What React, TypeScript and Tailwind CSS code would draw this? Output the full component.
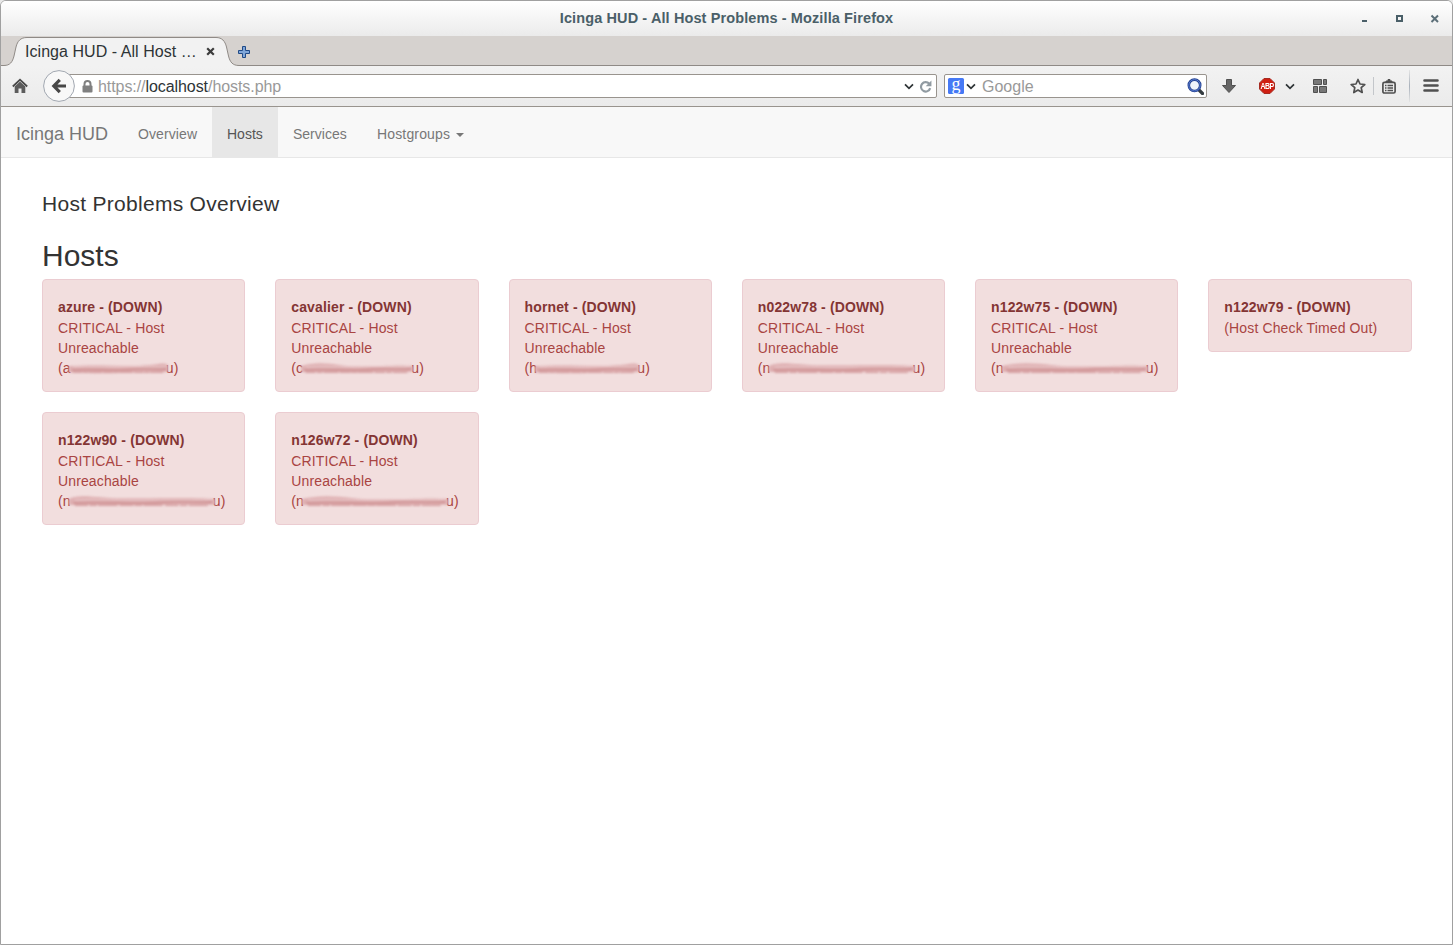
import React from "react";

type Host = {
  name: string;
  lines: string[];
  masked?: { start: string; end: string; width: number; variant: number };
};

const unreachable = ["CRITICAL - Host", "Unreachable"];

const hosts: Host[] = [
  { name: "azure", lines: unreachable, masked: { start: "a", end: "u", width: 95, variant: 0 } },
  { name: "cavalier", lines: unreachable, masked: { start: "c", end: "u", width: 108, variant: 1 } },
  { name: "hornet", lines: unreachable, masked: { start: "h", end: "u", width: 100, variant: 0 } },
  { name: "n022w78", lines: unreachable, masked: { start: "n", end: "u", width: 142, variant: 2 } },
  { name: "n122w75", lines: unreachable, masked: { start: "n", end: "u", width: 142, variant: 1 } },
  { name: "n122w79", lines: ["(Host Check Timed Out)"] },
  { name: "n122w90", lines: unreachable, masked: { start: "n", end: "u", width: 142, variant: 2 } },
  { name: "n126w72", lines: unreachable, masked: { start: "n", end: "u", width: 142, variant: 1 } },
];

const smudgeShapes = [
  "M0 5 C15 4.500 25 4 40 4.500 S70 5 82 4 S94 1 100 4 L100 11 C85 12 65 11.500 50 12 S15 12 0 11.500Z",
  "M0 5 C12 1 22 2 34 4 S60 5.500 72 5 S90 4 100 5 L100 11 C85 10 70 11.500 55 12 S20 11 0 11Z",
  "M0 5 C4 1 12 2 24 3.500 S55 4 70 4 S92 4 100 5 L100 11 C82 10.500 68 11 50 11.500 S14 11 0 11Z",
];

function Smudge({ width, variant }: { width: number; variant: number }) {
  return (
    <svg
      className="-mx-0.5 inline-block h-3.5 shrink-0 overflow-visible blur-[0.8px]"
      style={{ width: width + 4 }}
      viewBox="0 0 100 14"
      preserveAspectRatio="none"
    >
      <path d={smudgeShapes[variant]} fill="#dfb0b2" />
      <path d="M4 6 C20 4 35 7 55 6 S80 7 98 5.500" fill="none" stroke="#e6c2c4" strokeWidth="1.500" />
      <path d="M3 9 C20 7.500 45 10 62 8.500 S86 9 98 8" fill="none" stroke="#cf9294" strokeWidth="1.800" />
      <path d="M4 11.300H97" stroke="#d39b9d" strokeWidth="1.300" strokeDasharray="9 1 5 1 13 2" />
    </svg>
  );
}

function HostCard({ host }: { host: Host }) {
  return (
    <div className="rounded-[4px] border border-[#ebccd1] bg-[#f2dede] px-[15px] pt-[17px] pb-[13px] text-[14px] leading-5 tracking-[0.13px] text-[#a94442]">
      <div className="h-[21px] font-bold text-[#843534]">{host.name} - (DOWN)</div>
      {host.lines.map((line) => (
        <div key={line} className="whitespace-nowrap">{line}</div>
      ))}
      {host.masked && (
        <div className="flex h-5 items-center">
          <span>({host.masked.start}</span>
          <Smudge width={host.masked.width} variant={host.masked.variant} />
          <span>{host.masked.end})</span>
        </div>
      )}
    </div>
  );
}

function Chevron({ className }: { className: string }) {
  return (
    <svg className={"h-[7px] w-[10px] shrink-0 " + className} viewBox="0 0 10 7">
      <path d="M1 1.300 5 5.300 9 1.300" fill="none" stroke="#2e3436" strokeWidth="1.700" />
    </svg>
  );
}

function TitleBar() {
  return (
    <div className="flex h-[35px] items-center bg-linear-to-b from-white to-[#ebebeb]">
      <div className="w-[120px]" />
      <div className="flex-1 text-center text-[14.5px] font-bold tracking-[0.11px] text-[#4a5f68]">
        Icinga HUD - All Host Problems - Mozilla Firefox
      </div>
      <svg className="h-[35px] w-[120px]" viewBox="0 0 120 35">
        <path d="M30 19h5v2h-5z" fill="#4a5f68" />
        <path d="M65 15h5v5h-5z" fill="none" stroke="#4a5f68" strokeWidth="2" />
        <path d="M99.500 14.500 106 21M106 14.500 99.500 21" stroke="#5c6f78" strokeWidth="2" />
      </svg>
    </div>
  );
}

function TabStrip() {
  return (
    <div className="grid h-[30px] grid-cols-1 bg-[#d6d2cf]">
      <svg className="col-start-1 row-start-1 h-[30px] w-full" viewBox="0 0 1451 30" preserveAspectRatio="none">
        <path
          d="M0 29.500H3C9 29.500 11.500 26 13 20L15 11C16.500 5 19.500 1.500 26 1.500H215C221 1.500 224 5 225.500 11L227.500 20C229 26 231.500 29.500 238 29.500H1451V31H0Z"
          fill="#f2f2f2"
          stroke="#8f8a86"
        />
      </svg>
      <div className="col-start-1 row-start-1 flex items-center pl-6">
        <span className="w-[181px] pt-[2px] text-[16px] tracking-[0.05px] whitespace-nowrap text-[#2e3436]">Icinga HUD - All Host …</span>
        <svg className="mt-px h-[9px] w-[9px]" viewBox="0 0 9 9">
          <path d="M1.200 1.200 7.800 7.800M7.800 1.200 1.200 7.800" stroke="#3c3c3c" strokeWidth="2.200" />
        </svg>
        <svg className="mt-[2px] ml-[23px] h-3 w-3" viewBox="0 0 12 12">
          <path
            d="M4.500.5h3v4h4v3h-4v4h-3v-4h-4v-3h4z"
            fill="#7fa6d9"
            stroke="#204a87"
            strokeLinejoin="round"
          />
        </svg>
      </div>
    </div>
  );
}

function ToolBar() {
  return (
    <div className="flex h-[41px] items-center border-b border-[#99948e] bg-linear-to-b from-[#f2f2f2] to-[#ebebeb]">
      <svg className="ml-[11px] h-4 w-4 shrink-0" viewBox="0 0 16 16">
        <path d="M8 3.500 13.300 8.600V15H9.500V10.500H6.500V15H2.700V8.600Z" fill="#5c5c5c" />
        <path d="M.8 8.500 8 1.700 15.200 8.500" fill="none" stroke="#4a4a4a" strokeWidth="1.800" />
      </svg>
      <svg className="z-10 ml-[15px] h-8 w-8 shrink-0" viewBox="0 0 32 32">
        <circle cx="16" cy="16" r="15.400" fill="#f8f8f8" stroke="#a1a7b0" />
        <path d="M16.800 9.800 10.800 16l6 6.200M11 16h12" fill="none" stroke="#474747" strokeWidth="3.200" />
      </svg>
      <div className="-ml-[9px] flex h-6 w-[871px] items-center rounded-[2px] border border-[#99948e] bg-white">
        <svg className="ml-[15px] h-[13px] w-[11px] shrink-0" viewBox="0 0 11 13">
          <path d="M2.500 6V4a3 3 0 0 1 6 0v2" fill="none" stroke="#808080" strokeWidth="2" />
          <rect x="0.500" y="5.500" width="10" height="7" rx="1" fill="#808080" />
        </svg>
        <span className="ml-[5px] flex-1 pt-[2px] text-[16px] tracking-[-0.07px] whitespace-nowrap text-[#999]">
          https://<span className="text-[#2e3436]">localhost</span>/hosts.php
        </span>
        <Chevron className="mr-[5px]" />
        <svg className="mr-[4px] h-[13px] w-[13px] shrink-0" viewBox="0 0 12 12">
          <path d="M9.400 3.500A4.300 4.300 0 1 0 10.300 7.500" fill="none" stroke="#919ba2" strokeWidth="2" />
          <path d="M11.500.5v5.300H6.200z" fill="#919ba2" />
        </svg>
      </div>
      <div className="ml-[7px] flex h-6 w-[263px] items-center rounded-[2px] border border-[#99948e] bg-white">
        <div className="ml-[3px] flex h-4 w-4 shrink-0 justify-center rounded-[1.5px] bg-[#4679f5] font-['Liberation_Serif',serif] text-[18px] leading-[12px] text-white">
          g
        </div>
        <Chevron className="ml-[2px]" />
        <span className="ml-[6px] flex-1 pt-[2px] text-[16px] text-[#999]">Google</span>
        <svg className="mr-[2px] h-[17px] w-[17px] shrink-0" viewBox="0 0 17 17">
          <path d="m11.500 11.500 4 4" stroke="#343b40" strokeWidth="3.200" strokeLinecap="round" />
          <circle cx="7.500" cy="7.300" r="5.700" fill="#eef3fb" stroke="#23408f" strokeWidth="2.600" />
          <circle cx="7.500" cy="7.300" r="5.700" fill="none" stroke="#5c80d2" strokeWidth="1" />
        </svg>
      </div>
      <svg className="ml-[15px] h-[14px] w-[14px] shrink-0" viewBox="0 0 14 14">
        <path d="M4.500.5h5v6h4L7 13.500.5 6.500h4z" fill="#666" stroke="#505050" />
      </svg>
      <div className="ml-[23px] grid h-4 w-4 shrink-0 grid-cols-1">
        <svg className="col-start-1 row-start-1 h-4 w-4" viewBox="0 0 16 16">
          <path d="M5 .5h6L15.500 5v6L11 15.500H5L.5 11V5z" fill="#cf1f12" stroke="#a52c22" />
        </svg>
        <span className="col-start-1 row-start-1 scale-y-[1.3] text-center text-[7px] leading-4 font-bold tracking-[-0.6px] text-white">
          ABP
        </span>
      </div>
      <Chevron className="ml-[10px]" />
      <svg className="ml-[18px] h-[14px] w-[14px] shrink-0" viewBox="0 0 14 14">
        <path d="M.5.500h8v5h-8zM10.500.500h3v5h-3zM.5 7.500h4v6h-4zM6.500 7.500h7v6h-7z" fill="#777" stroke="#505050" />
      </svg>
      <svg className="ml-[23px] h-4 w-4 shrink-0" viewBox="0 0 16 16">
        <path d="m8 1.500 2 4.500 4.800.5-3.600 3.200 1 4.800L8 12l-4.200 2.500 1-4.800L1.200 6.500 6 6z" fill="none" stroke="#505050" strokeWidth="1.700" strokeLinejoin="round" />
      </svg>
      <div className="ml-[7px] h-[18px] w-px shrink-0 bg-[#c3c6ca]" />
      <svg className="ml-2 h-[15px] w-[14px] shrink-0" viewBox="0 0 14 15">
        <rect x="0.900" y="3.400" width="12.200" height="10.600" rx="1.500" fill="none" stroke="#505050" strokeWidth="1.700" />
        <path d="M4 3.500V2h2V.5h2V2h2v1.500z" fill="#505050" stroke="#505050" />
        <path d="M3 6.500h1.500M3 9h1.500M3 11.500h1.500M5.500 6.500H11M5.500 9H11M5.500 11.500H11" stroke="#505050" strokeWidth="1.300" />
      </svg>
      <div className="ml-[13px] h-8 w-px shrink-0 bg-linear-to-b from-[#e4e4e4] via-[#a9b1bb] to-[#e4e4e4]" />
      <svg className="mb-px ml-[13px] h-[13px] w-4 shrink-0" viewBox="0 0 16 13">
        <path d="M1.500 1.500h13M1.500 6.500h13M1.500 11.500h13" stroke="#505050" strokeWidth="2.600" strokeLinecap="round" />
      </svg>
    </div>
  );
}

function NavBar() {
  return (
    <nav className="flex h-[51px] items-stretch border-b border-[#e7e7e7] bg-[#f8f8f8] text-[14px] tracking-[0.1px] text-[#777]">
      <a className="flex w-[122px] items-center pt-[4px] pl-[15px] text-[18px] tracking-normal whitespace-nowrap">Icinga HUD</a>
      <a className="flex w-[89px] items-center pt-[5px] pl-[15px]">Overview</a>
      <a className="flex w-[66px] items-center bg-[#e7e7e7] pt-[5px] pl-[15px] tracking-normal text-[#555]">Hosts</a>
      <a className="flex w-[84px] items-center pt-[5px] pl-[15px] tracking-normal">Services</a>
      <a className="flex items-center px-[15px] pt-[5px] tracking-[0.15px]">
        Hostgroups
        <svg className="mt-px ml-[6px] h-1 w-2" viewBox="0 0 8 4">
          <path d="M0 0h8L4 4z" fill="#777" />
        </svg>
      </a>
    </nav>
  );
}

export default function App() {
  return (
    <div className="h-[945px] w-[1453px] overflow-hidden bg-[#e8e8e8]">
      <div className="flex h-full flex-col overflow-hidden rounded-t-[6px] border border-[#a0a0a0] bg-white font-['Liberation_Sans',Arial,sans-serif]">
        <TitleBar />
        <TabStrip />
        <ToolBar />
        <NavBar />
        <main className="px-[41px] pt-[33px] text-[#333]">
          <h1 className="text-[21px] leading-[26px] tracking-[0.29px]">Host Problems Overview</h1>
          <h2 className="mt-[22px] h-[40px] text-[30px] leading-[33px]">Hosts</h2>
          <div className="grid w-[1369.6px] grid-cols-6 items-start gap-x-[30px] gap-y-5">
            {hosts.map((host) => (
              <HostCard key={host.name} host={host} />
            ))}
          </div>
        </main>
      </div>
    </div>
  );
}
